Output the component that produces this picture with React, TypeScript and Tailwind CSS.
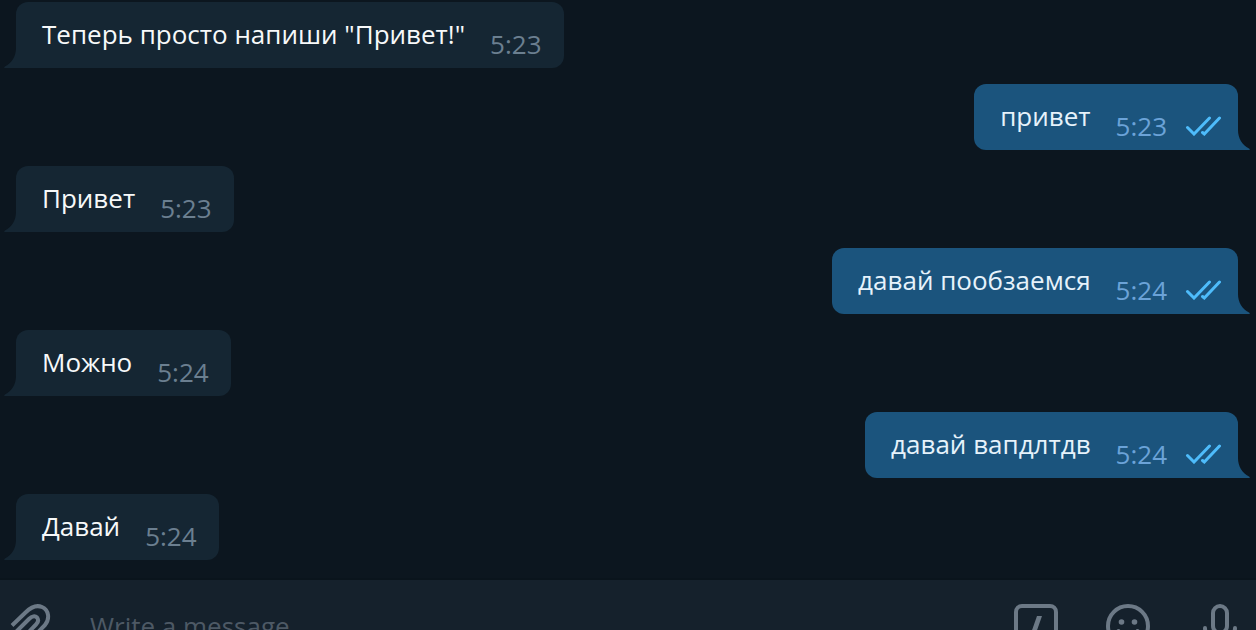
import React from 'react';

interface Message {
  id: number;
  text: string;
  time: string;
  outgoing?: boolean;
}

const messages: Message[] = [
  { id: 1, text: 'Теперь просто напиши "Привет!"', time: '5:23' },
  { id: 2, text: 'привет', time: '5:23', outgoing: true },
  { id: 3, text: 'Привет', time: '5:23' },
  { id: 4, text: 'давай пообзаемся', time: '5:24', outgoing: true },
  { id: 5, text: 'Можно', time: '5:24' },
  { id: 6, text: 'давай вапдлтдв', time: '5:24', outgoing: true },
  { id: 7, text: 'Давай', time: '5:24' },
];

// Curved tail at the lower corner of a bubble
function BubbleTail({ outgoing }: { outgoing?: boolean }) {
  return (
    <svg
      aria-hidden="true"
      viewBox="0 0 12 20"
      className={
        outgoing
          ? 'absolute bottom-0 left-full h-5 w-3 -scale-x-100 text-[#1b547d]'
          : 'absolute bottom-0 right-full h-5 w-3 text-[#152633]'
      }
    >
      <path d="M12 0C12 8 8 15 1 18.4C0 19 0 20 1 20H12Z" fill="currentColor" />
    </svg>
  );
}

function DoubleCheck() {
  return (
    <svg
      role="img"
      aria-label="Read"
      viewBox="0 0 36 20"
      className="mt-[18px] ml-[18px] h-5 w-9 shrink-0 text-[#4ebcfb]"
      fill="none"
      stroke="currentColor"
      strokeWidth="3"
      strokeLinecap="round"
    >
      <path d="M2.5 11.5L9 18L24.5 2" />
      <path d="M17.5 16.5L19.3 18L34.5 2" />
    </svg>
  );
}

function MessageBubble({ message }: { message: Message }) {
  const { text, time, outgoing } = message;

  return (
    <li
      className={`relative flex items-start pt-[14px] pb-1.5 pl-[26px] ${
        outgoing
          ? 'self-end rounded-xl rounded-br-none bg-[#1b547d] pr-[17px] text-[#e6f2fb]'
          : 'self-start rounded-xl rounded-bl-none bg-[#152633] pr-[22px] text-[#f7f9fa]'
      }`}
    >
      <p>{text}</p>
      <time className={`mt-2.5 ml-[25px] ${outgoing ? 'text-[#6ba3d8]' : 'text-[#6b7f90]'}`}>
        {time}
      </time>
      {outgoing && <DoubleCheck />}
      <BubbleTail outgoing={outgoing} />
    </li>
  );
}

function ComposerIcon({ children }: { children: React.ReactNode }) {
  return (
    <svg
      aria-hidden="true"
      viewBox="0 0 44 44"
      className="size-11"
      fill="none"
      stroke="currentColor"
      strokeWidth="4"
      strokeLinecap="round"
      strokeLinejoin="round"
    >
      {children}
    </svg>
  );
}

function Composer() {
  return (
    <form className="flex h-[94px] shrink-0 items-center border-t-2 border-[#0a141c] bg-[#15212c] pr-[14px] pl-2 text-[#6c7986]">
      <button type="button" aria-label="Attach file" className="shrink-0">
        <ComposerIcon>
          <path
            d="M4 21.5L17.5 8.5C23 3 28 .5 34 3C41 6 42 15 37 21L19.5 39C15 43 8 42 6 37C4 33 6 30 9 27L21 15C24 12 27 11.5 29 13.5C31 16 30 18.5 28 20.5L15 34"
            strokeLinecap="butt"
          />
        </ComposerIcon>
      </button>
      <input
        type="text"
        aria-label="Message"
        placeholder="Write a message..."
        className="ml-[38px] min-w-0 flex-1 bg-transparent text-[#f7f9fa] outline-none placeholder:text-[#4d5965]"
      />
      <div className="flex shrink-0 gap-12">
        <button type="button" aria-label="Bot commands">
          <ComposerIcon>
            <rect x="2" y="2" width="40" height="40" rx="6" />
            <path d="M23 12H28L21 32H16Z" fill="currentColor" stroke="none" />
          </ComposerIcon>
        </button>
        <button type="button" aria-label="Emoji">
          <ComposerIcon>
            <circle cx="22" cy="22" r="20" />
            <circle cx="15.5" cy="18" r="2.8" fill="currentColor" stroke="none" />
            <circle cx="28.5" cy="18" r="2.8" fill="currentColor" stroke="none" />
            <path d="M12.5 27C16 34 28 34 31.5 27" />
          </ComposerIcon>
        </button>
        <button type="button" aria-label="Record voice message">
          <ComposerIcon>
            <rect x="15" y="2" width="14" height="27" rx="7" />
            <path d="M7 24C7 40 37 40 37 24M22 36V42" />
          </ComposerIcon>
        </button>
      </div>
    </form>
  );
}

export default function App() {
  return (
    <main className="flex h-screen flex-col overflow-hidden bg-[#0c161f] font-['Open_Sans','Noto_Sans',sans-serif] text-[26px] leading-9">
      <ul className="flex shrink-0 flex-col gap-4 pt-0.5 pr-[18px] pb-[18px] pl-4">
        {messages.map((message) => (
          <MessageBubble key={message.id} message={message} />
        ))}
      </ul>
      <Composer />
    </main>
  );
}
